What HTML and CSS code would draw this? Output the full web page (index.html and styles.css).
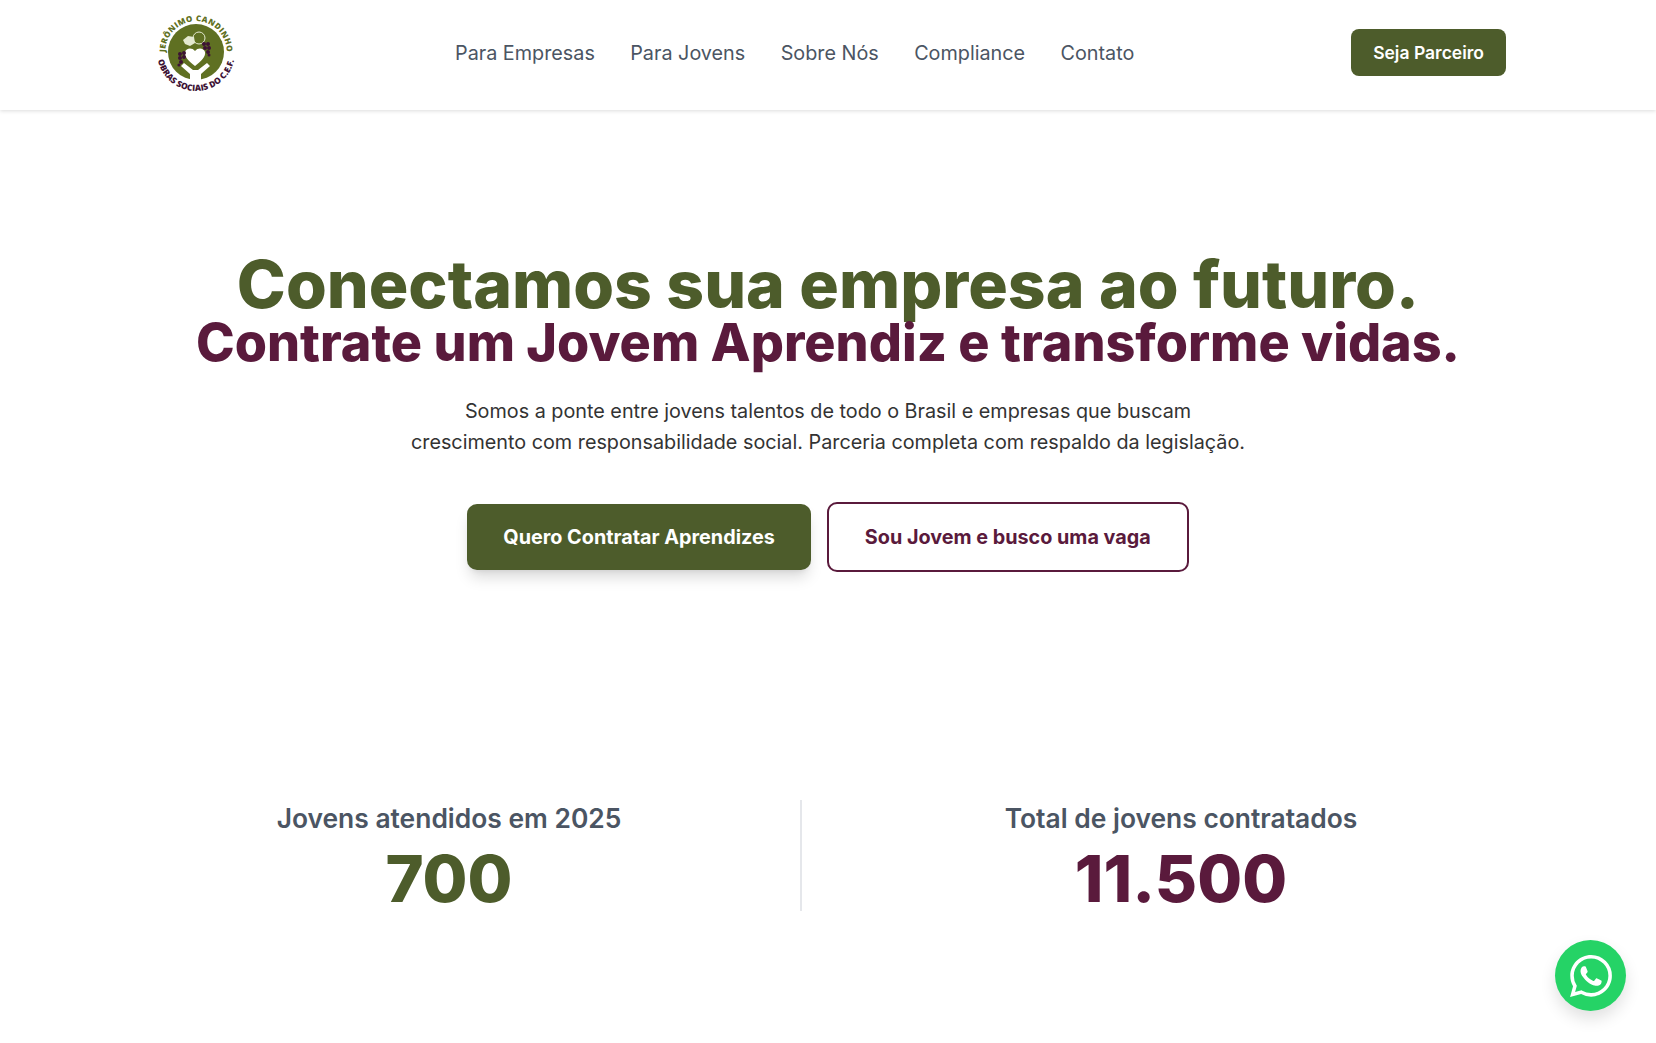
FILE: index.html
```html
<!DOCTYPE html>
<html lang="pt-BR">
<head>
  <meta charset="UTF-8">
  <meta name="viewport" content="width=device-width, initial-scale=1.0">
  <title>Jerônimo Candinho</title>
  <link rel="stylesheet" href="styles.css">
</head>
<body>
  <header class="site-header">
    <a class="logo" href="#">
      <svg width="84" height="84" viewBox="0 0 84 84">
        <defs>
          <path id="arc-top" d="M11 48 A30.8 30.8 0 1 1 71 48"></path>
          <path id="arc-bottom" d="M2 41 A39 39 0 0 0 80 41"></path>
        </defs>
        <circle cx="41" cy="41" r="28" fill="#5f7022"></circle>
        <path d="M35 71 V63 L26 55 L29 52 L38 59 H43 L52 52 L55 55 L46 63 V71 Z" fill="#fff"></path>
        <path d="M40 55 C34 50 29 46 30 41 C31 37 37 36 40 40 C43 36 49 37 50 41 C51 46 46 50 40 55 Z" fill="#fff"></path>
        <circle cx="44" cy="27" r="6" fill="none" stroke="#e4e9d0" stroke-width="1"></circle>
        <path d="M28 29 L33 25 L39 26 L40 32 L35 35 L30 33 Z" fill="#e4e9d0"></path>
        <g fill="#3d1235">
          <circle cx="25" cy="43" r="2"></circle>
          <circle cx="29" cy="42" r="2"></circle>
          <circle cx="25" cy="47" r="2"></circle>
          <circle cx="29" cy="46" r="2"></circle>
          <circle cx="26" cy="51" r="2"></circle>
          <circle cx="24" cy="54" r="1.6"></circle>
          <circle cx="49" cy="33" r="2"></circle>
          <circle cx="53" cy="33" r="2"></circle>
          <circle cx="50" cy="37" r="2"></circle>
          <circle cx="54" cy="37" r="2"></circle>
          <circle cx="53" cy="41" r="2"></circle>
          <circle cx="54" cy="44" r="1.5"></circle>
        </g>
        <text class="logo-top"><textPath href="#arc-top" startOffset="50%" text-anchor="middle">JERÔNIMO CANDINHO</textPath></text>
        <text class="logo-bottom"><textPath href="#arc-bottom" startOffset="50%" text-anchor="middle">OBRAS SOCIAIS DO C.E.F.</textPath></text>
      </svg>
    </a>
    <nav class="main-nav">
      <a href="#">Para Empresas</a>
      <a href="#">Para Jovens</a>
      <a href="#">Sobre Nós</a>
      <a href="#">Compliance</a>
      <a href="#">Contato</a>
    </nav>
    <a class="btn-partner" href="#">Seja Parceiro</a>
  </header>

  <section class="hero">
    <h1>Conectamos sua empresa ao futuro.</h1>
    <h2>Contrate um Jovem Aprendiz e transforme vidas.</h2>
    <p>Somos a ponte entre jovens talentos de todo o Brasil e empresas que buscam<br>crescimento com responsabilidade social. Parceria completa com respaldo da legislação.</p>
    <div class="hero-actions">
      <a class="btn btn-primary" href="#">Quero Contratar Aprendizes</a>
      <a class="btn btn-outline" href="#">Sou Jovem e busco uma vaga</a>
    </div>
  </section>

  <section class="stats">
    <div class="stat stat-left">
      <div class="stat-label">Jovens atendidos em 2025</div>
      <div class="stat-value">700</div>
    </div>
    <div class="stat stat-right">
      <div class="stat-label">Total de jovens contratados</div>
      <div class="stat-value">11.500</div>
    </div>
  </section>

  <a class="whatsapp" href="#" aria-label="WhatsApp">
    <svg width="42" height="42" viewBox="0 0 24 24" fill="#fff">
      <path d="M17.472 14.382c-.297-.149-1.758-.867-2.03-.967-.273-.099-.471-.148-.67.15-.197.297-.767.966-.94 1.164-.173.199-.347.223-.644.075-.297-.15-1.255-.463-2.39-1.475-.883-.788-1.48-1.761-1.653-2.059-.173-.297-.018-.458.13-.606.134-.133.298-.347.446-.52.149-.174.198-.298.298-.497.099-.198.05-.371-.025-.52-.075-.149-.669-1.612-.916-2.207-.242-.579-.487-.5-.669-.51-.173-.008-.371-.01-.57-.01-.198 0-.52.074-.792.372-.272.297-1.04 1.016-1.04 2.479 0 1.462 1.065 2.875 1.213 3.074.149.198 2.096 3.2 5.077 4.487.709.306 1.262.489 1.694.625.712.227 1.36.195 1.871.118.571-.085 1.758-.719 2.006-1.413.248-.694.248-1.289.173-1.413-.074-.124-.272-.198-.57-.347m-5.421 7.403h-.004a9.87 9.87 0 01-5.031-1.378l-.361-.214-3.741.982.998-3.648-.235-.374a9.86 9.86 0 01-1.51-5.26c.001-5.45 4.436-9.884 9.888-9.884 2.64 0 5.122 1.03 6.988 2.898a9.825 9.825 0 012.893 6.994c-.003 5.45-4.437 9.884-9.885 9.884m8.413-18.297A11.815 11.815 0 0012.05 0C5.495 0 .16 5.335.157 11.892c0 2.096.547 4.142 1.588 5.945L.057 24l6.305-1.654a11.882 11.882 0 005.683 1.448h.005c6.554 0 11.89-5.335 11.893-11.893a11.821 11.821 0 00-3.48-8.413z"></path>
    </svg>
  </a>
</body>
</html>
```

FILE: styles.css
```css
* {
  box-sizing: border-box;
}
html, body {
  height: 100%;
}
body {
  margin: 0;
  font-family: Inter, "Liberation Sans", sans-serif;
  color: #333;
  background-color: #fff;
  overflow: hidden;
}
a {
  text-decoration: none;
}

.site-header {
  height: 110px;
  padding: 0 150px 5px 155px;
  display: flex;
  align-items: center;
  background-color: #fff;
  box-shadow: 0 1px 4px rgba(0, 0, 0, 0.14);
}
.logo {
  display: flex;
  width: 84px;
}
.logo-top {
  font-family: "Open Sans", sans-serif;
  font-size: 8px;
  font-weight: 800;
  letter-spacing: 0.4px;
  fill: #5f7022;
}
.logo-bottom {
  font-family: "Open Sans", sans-serif;
  font-size: 8.5px;
  font-weight: 800;
  fill: #3d1235;
}
.main-nav {
  display: flex;
  gap: 35.4px;
  margin-left: 216px;
}
.main-nav a {
  font-size: 19.8px;
  color: #4b5563;
}
.btn-partner {
  margin-left: auto;
  padding: 13px 22px;
  border-radius: 8px;
  font-size: 17.5px;
  font-weight: 600;
  color: #fff;
  background-color: #4d5c2b;
}

.hero {
  padding-top: 141px;
  text-align: center;
}
.hero h1 {
  margin: 0;
  font-size: 66px;
  line-height: 66px;
  font-weight: 800;
  color: #4d5c2b;
}
.hero h2 {
  margin: 0;
  font-size: 52.1px;
  line-height: 52px;
  font-weight: 800;
  color: #5a1a3c;
}
.hero p {
  margin: 27px 0 0;
  font-size: 19.8px;
  line-height: 31px;
}
.hero-actions {
  margin-top: 44px;
  display: flex;
  justify-content: center;
  align-items: center;
  gap: 16px;
}
.btn {
  border-radius: 10px;
  font-size: 19.8px;
  font-weight: 700;
}
.btn-primary {
  padding: 21px 36px;
  color: #fff;
  background-color: #4d5c2b;
  box-shadow: 0 10px 15px -3px rgba(0, 0, 0, 0.15), 0 4px 6px -4px rgba(0, 0, 0, 0.1);
}
.btn-outline {
  padding: 21px 36px;
  border: 2px solid #5a1a3c;
  color: #5a1a3c;
}

.stats {
  margin-top: 228px;
  padding-left: 98px;
  display: grid;
  grid-template-columns: 704px 758px;
  text-align: center;
}
.stat-left {
  border-right: 2px solid #e5e7eb;
}
.stat {
  height: 111px;
}
.stat-label {
  font-size: 26.4px;
  line-height: 37px;
  font-weight: 600;
  color: #4b5563;
}
.stat-value {
  font-size: 65px;
  line-height: 84px;
  font-weight: 800;
}
.stat-left .stat-value {
  color: #4d5c2b;
}
.stat-right .stat-value {
  color: #5a1a3c;
}

.whatsapp {
  position: fixed;
  right: 30px;
  bottom: 32px;
  width: 71px;
  height: 71px;
  display: flex;
  align-items: center;
  justify-content: center;
  border-radius: 50%;
  background-color: #25d366;
  box-shadow: 0 8px 16px rgba(0, 0, 0, 0.12);
}
```
